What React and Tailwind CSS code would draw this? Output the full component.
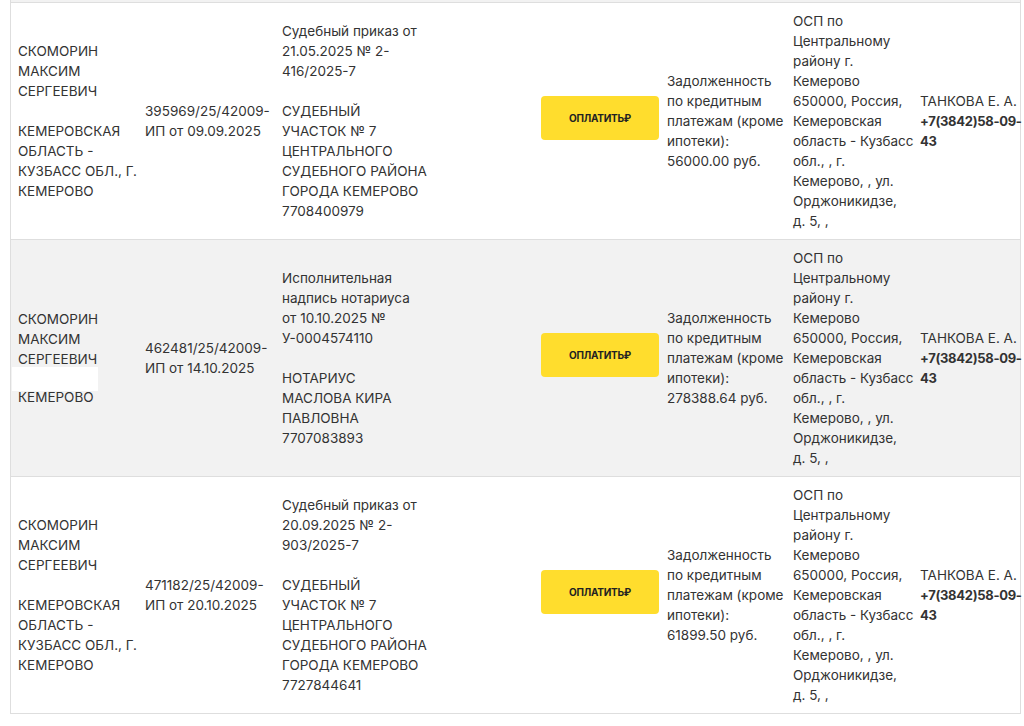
const osp = [
  "ОСП по",
  "Центральному",
  "району г.",
  "Кемерово",
  "650000, Россия,",
  "Кемеровская",
  "область - Кузбасс",
  "обл., , г.",
  "Кемерово, , ул.",
  "Орджоникидзе,",
  "д. 5, ,",
];

const rows = [
  {
    debtor: ["СКОМОРИН", "МАКСИМ", "СЕРГЕЕВИЧ"],
    address: ["КЕМЕРОВСКАЯ", "ОБЛАСТЬ -", "КУЗБАСС ОБЛ., Г.", "КЕМЕРОВО"],
    hidden: false,
    ip: ["395969/25/42009-", "ИП от 09.09.2025"],
    doc: ["Судебный приказ от", "21.05.2025 № 2-", "416/2025-7"],
    issuer: ["СУДЕБНЫЙ", "УЧАСТОК № 7", "ЦЕНТРАЛЬНОГО", "СУДЕБНОГО РАЙОНА", "ГОРОДА КЕМЕРОВО", "7708400979"],
    debt: "56000.00 руб.",
    gray: false,
  },
  {
    debtor: ["СКОМОРИН", "МАКСИМ", "СЕРГЕЕВИЧ"],
    address: ["КЕМЕРОВО"],
    hidden: true,
    ip: ["462481/25/42009-", "ИП от 14.10.2025"],
    doc: ["Исполнительная", "надпись нотариуса", "от 10.10.2025 №", "У-0004574110"],
    issuer: ["НОТАРИУС", "МАСЛОВА КИРА", "ПАВЛОВНА", "7707083893"],
    debt: "278388.64 руб.",
    gray: true,
  },
  {
    debtor: ["СКОМОРИН", "МАКСИМ", "СЕРГЕЕВИЧ"],
    address: ["КЕМЕРОВСКАЯ", "ОБЛАСТЬ -", "КУЗБАСС ОБЛ., Г.", "КЕМЕРОВО"],
    hidden: false,
    ip: ["471182/25/42009-", "ИП от 20.10.2025"],
    doc: ["Судебный приказ от", "20.09.2025 № 2-", "903/2025-7"],
    issuer: ["СУДЕБНЫЙ", "УЧАСТОК № 7", "ЦЕНТРАЛЬНОГО", "СУДЕБНОГО РАЙОНА", "ГОРОДА КЕМЕРОВО", "7727844641"],
    debt: "61899.50 руб.",
    gray: false,
  },
];

function Lines({ lines }) {
  return lines.map((l, i) => (
    <div key={i} className="whitespace-nowrap">{l}</div>
  ));
}

function Row({ row }) {
  return (
    <div className={`flex items-center border-b border-[#dedede] py-2 ${row.gray ? "bg-[#f2f2f2]" : "bg-white"}`}>
      <div className="w-[126px] shrink-0 pl-[7px]">
        <Lines lines={row.debtor} />
        {row.hidden ? (
          <div className="h-5 -ml-[6px]">
            <div className="w-[86px] h-6 -mt-0.5 bg-white" />
          </div>
        ) : (
          <div className="h-5" />
        )}
        <Lines lines={row.address} />
      </div>
      <div className="w-[137px] shrink-0 pl-2">
        <Lines lines={row.ip} />
      </div>
      <div className="w-[259px] shrink-0 pl-2">
        <Lines lines={row.doc} />
        <div className="h-5" />
        <Lines lines={row.issuer} />
      </div>
      <div className="w-[126px] shrink-0 pl-2 pb-1.5">
        <button className="w-[118px] h-11 rounded bg-[#ffdd2d] text-[10px] font-bold tracking-tight text-[#222]">
          ОПЛАТИТЬ₽
        </button>
      </div>
      <div className="w-[126px] shrink-0 pl-2">
        <Lines lines={["Задолженность", "по кредитным", "платежам (кроме", "ипотеки):", row.debt]} />
      </div>
      <div className="w-[127px] shrink-0 pl-2">
        <Lines lines={osp} />
      </div>
      <div className="w-[108px] shrink-0 pl-2">
        <div className="whitespace-nowrap">ТАНКОВА Е. А.</div>
        <div className="font-bold text-[13px] tracking-[-0.3px]">
          <div className="whitespace-nowrap">+7(3842)58-09-</div>
          <div>43</div>
        </div>
      </div>
    </div>
  );
}

export default function App() {
  return (
    <div className="min-h-[726px] bg-white font-['Inter',sans-serif] text-[13.5px] leading-5 text-[#333]">
      <div className="ml-[10px] w-[1011px] border-x border-[#dedede]">
        <div className="h-[3px] bg-[#f2f2f2] border-b border-[#dedede]" />
        {rows.map((row) => (
          <Row key={row.ip[0]} row={row} />
        ))}
      </div>
    </div>
  );
}
